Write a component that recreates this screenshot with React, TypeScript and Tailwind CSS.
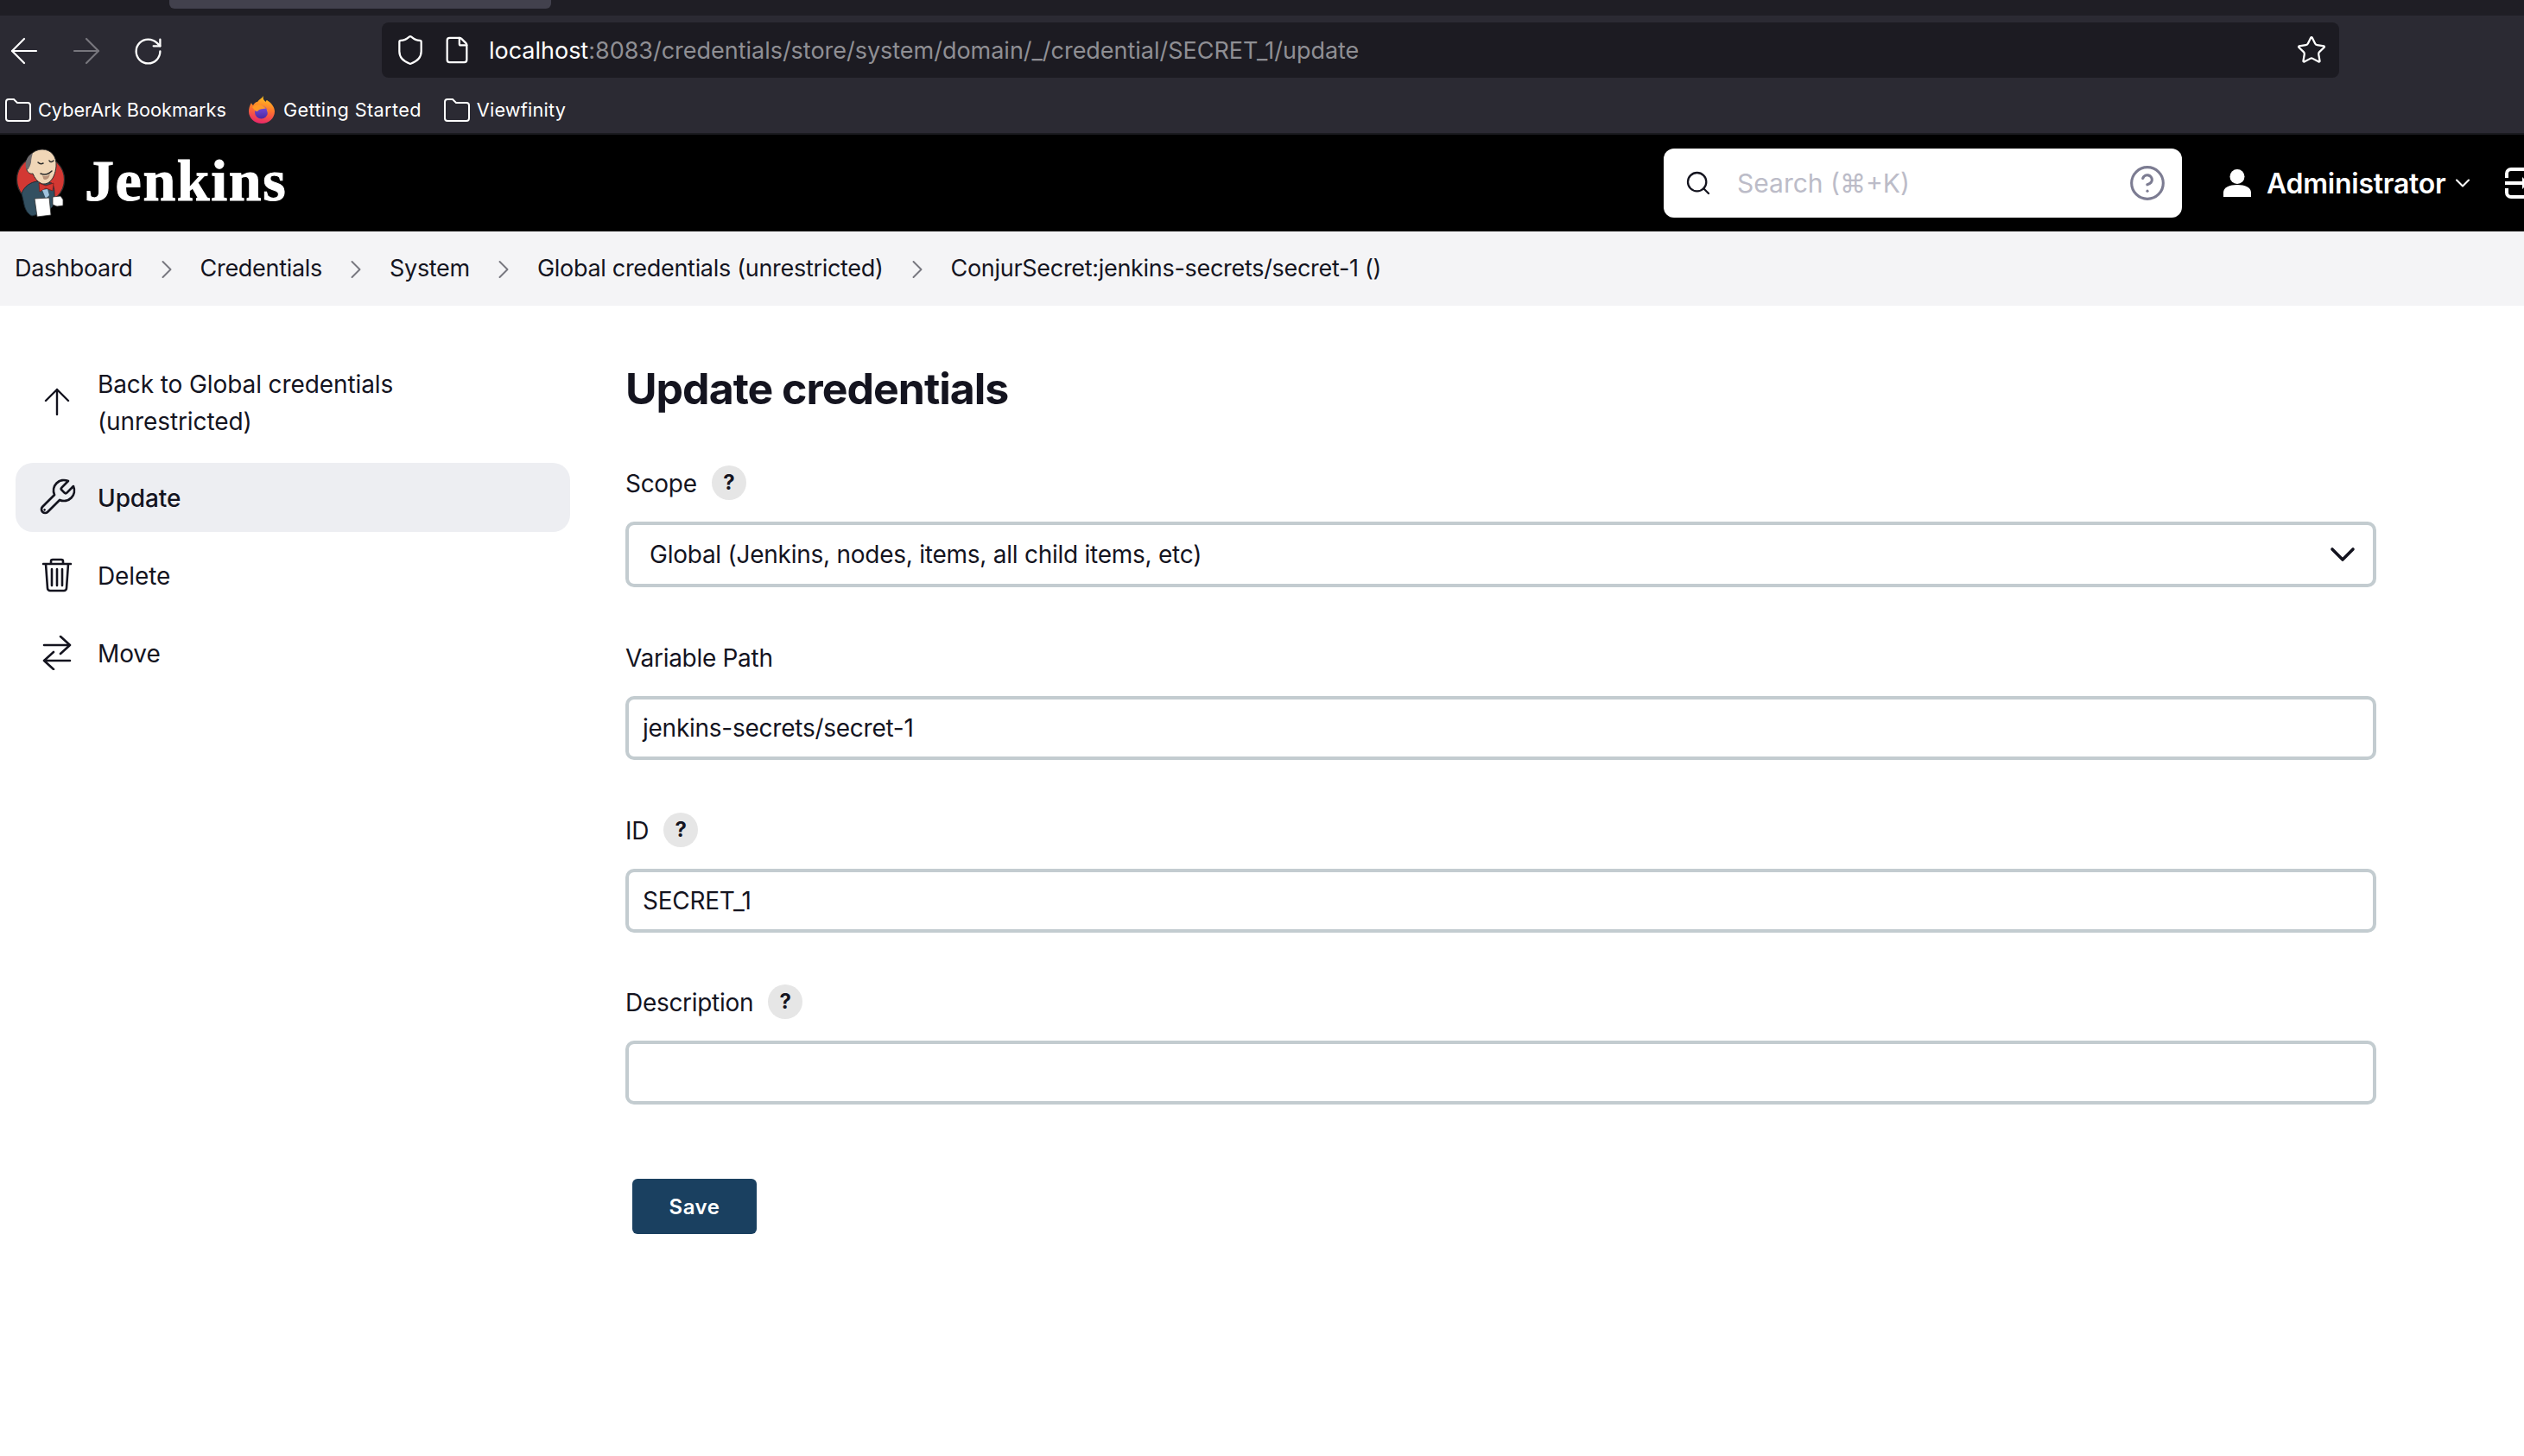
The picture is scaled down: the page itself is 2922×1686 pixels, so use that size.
import React from "react";
import { ArrowLeft, ArrowRight, RotateCw, Shield, File, Star, Search, CircleHelp, ChevronDown, ChevronRight } from "lucide-react";

const inter = "font-['Inter','Noto_Sans',sans-serif]";

function FolderIcon({ cls }: { cls?: string }) {
  return (
    <svg width="30" height="27" viewBox="0 0 30 27" fill="none" stroke="#fff" strokeWidth="2" className={`shrink-0 ${cls ?? ""}`}>
      <path d="M1 4a3 3 0 0 1 3-3h6l4 4h12a3 3 0 0 1 3 3v15a3 3 0 0 1-3 3H4a3 3 0 0 1-3-3z" />
    </svg>
  );
}

function FirefoxLogo() {
  return (
    <svg width="31" height="32" viewBox="0 0 31 32" className="shrink-0">
      <defs>
        <linearGradient id="ff" x1="0.6" y1="0" x2="0.4" y2="1">
          <stop offset="0" stopColor="#ffc81f" />
          <stop offset="0.45" stopColor="#ff7a2b" />
          <stop offset="1" stopColor="#e8246a" />
        </linearGradient>
        <linearGradient id="fp" x1="0.5" y1="0" x2="0.5" y2="1">
          <stop offset="0" stopColor="#7a4de0" />
          <stop offset="1" stopColor="#4a2aa0" />
        </linearGradient>
      </defs>
      <path d="M17 0c-1 3 0 5 3 7 0-1 0-2 1-2 5 3 9 8 9 13 0 8-7 14-15 14S0 26 0 18c0-3 1-7 3-10 0 1 1 2 2 3 1-2 3-4 5-4 2-3 5-4 7-7z" fill="url(#ff)" />
      <circle cx="14.5" cy="19" r="7.5" fill="url(#fp)" />
      <path d="M4 13c3-3 8-4 13-1 3 2 5 5 5 9 1-4-1-7-5-6-3 0-6 1-7 3-2 0-4-2-6-5z" fill="#ff9a26" />
    </svg>
  );
}

function JenkinsLogo() {
  return (
    <svg width="60" height="80" viewBox="0 0 60 80" className="shrink-0">
      <circle cx="29" cy="36" r="27.5" fill="#d33833" stroke="#2e2e2e" strokeWidth="1.2" />
      <path d="M7 52c3-8 10-13 18-14l17 2c3 4 3 10 3 16l-2 11-6 6-18 5c-5-2-8-8-9-13-1-5-2-9-3-13z" fill="#335061" stroke="#1c2c36" strokeWidth="1" />
      <path d="M14 24C12 10 20 1 31 1c10 0 17 8 16 20-1 8-3 13-7 17-3 3-8 4-11 2-4-2-7-6-9-11-3 1-7-2-7-5 0-3 1-5 1-5z" fill="#f0d6b7" stroke="#2e2e2e" strokeWidth="1" />
      <path d="M13 25c-3-7-1-16 7-20-1 4-2 7-2 11-1 4-2 7-5 9z" fill="#6d6b6d" />
      <path d="M26 16c2 2 4 2 6 1M39 14c1 2 3 2 5 0M29 29c5 2 9 1 13-3" stroke="#2a2a2a" strokeWidth="1.5" fill="none" strokeLinecap="round" />
      <path d="M31 31c3 2 7 1 9-2-1 5-3 7-6 7-2 0-2-2-3-5z" fill="#b8927a" />
      <path d="M27 40l8 3 9-3-1 9-8-3-7 4z" fill="#d33833" stroke="#7a1a17" strokeWidth="0.8" />
      <path d="M31 48l6-1 2 7-4 4z" fill="#9fc3dd" />
      <path d="M22 58l17-1 2 20-16 2z" fill="#fff" stroke="#2e2e2e" strokeWidth="0.8" />
      <path d="M43 56l9-1 3 4 0 7-7 1-5-2z" fill="#fff" stroke="#2e2e2e" strokeWidth="0.8" />
    </svg>
  );
}

function ArrowUpIcon() {
  return (
    <svg width="30" height="32" viewBox="0 0 30 32" fill="none" stroke="#14141f" strokeWidth="2.4" strokeLinecap="round" strokeLinejoin="round" className="shrink-0 -mt-[2px]">
      <path d="M15 31V2M2 15 15 2l13 13" />
    </svg>
  );
}

function WrenchIcon() {
  return (
    <svg width="48" height="48" viewBox="0 0 24 24" fill="none" stroke="#14141f" strokeWidth="1.35" strokeLinecap="round" strokeLinejoin="round" className="shrink-0">
      <path d="M14.7 6.3a1 1 0 0 0 0 1.4l1.6 1.6a1 1 0 0 0 1.4 0l3.77-3.77a6 6 0 0 1-7.94 7.94l-6.91 6.91a2.12 2.12 0 0 1-3-3l6.91-6.91a6 6 0 0 1 7.94-7.94l-3.76 3.76z" />
      <circle cx="4.8" cy="19.2" r="0.45" fill="#14141f" strokeWidth="0.5" />
    </svg>
  );
}

function TrashIcon() {
  return (
    <svg width="34" height="40" viewBox="0 0 34 40" fill="none" stroke="#14141f" strokeWidth="2.6" strokeLinecap="round" strokeLinejoin="round" className="shrink-0">
      <path d="M1 7h32M10 7V4a2 2 0 0 1 2-2h10a2 2 0 0 1 2 2v3M4 7l2 28a3 3 0 0 0 3 3h16a3 3 0 0 0 3-3l2-28M11 13v19M17 13v19M23 13v19" />
    </svg>
  );
}

function MoveIcon() {
  return (
    <svg width="34" height="40" viewBox="0 0 34 40" fill="none" stroke="#14141f" strokeWidth="2.6" strokeLinecap="round" strokeLinejoin="round" className="shrink-0">
      <path d="M2 11h30M21 1l11 10-11 10M32 29H2M13 19 2 29l11 10" />
    </svg>
  );
}

function PanelIcon() {
  return (
    <svg width="22" height="36" viewBox="0 0 22 36" fill="none" stroke="#fff" strokeWidth="4" className="shrink-0">
      <path d="M22 2H7a5 5 0 0 0-5 5v5M2 24v5a5 5 0 0 0 5 5h15" />
      <path d="M0 18h22" />
      <path d="M20 11v14l2-2v-10z" fill="#fff" stroke="none" />
    </svg>
  );
}

function Crumb({ children, last }: { children: React.ReactNode; last?: boolean }) {
  return (
    <>
      <span className="whitespace-nowrap">{children}</span>
      {!last && <ChevronRight className="mx-[21px] w-[36px] h-[36px] text-[#77777f] shrink-0" strokeWidth={1.3} />}
    </>
  );
}

function SideItem({ icon, children, active, cls }: { icon: React.ReactNode; children: React.ReactNode; active?: boolean; cls?: string }) {
  return (
    <div className={`flex items-center rounded-[20px] pl-[28px] min-h-[80px] ${active ? "bg-[#edeef2] font-medium" : ""} ${cls ?? "mb-[10px]"}`}>
      <div className="w-[40px] h-[48px] flex items-center justify-center mr-[27px] shrink-0">{icon}</div>
      <div className="leading-[43px] tracking-[-0.1px] pt-[2px]">{children}</div>
    </div>
  );
}

function Help() {
  return (
    <span className="ml-[17px] w-[40px] h-[40px] rounded-full bg-[#e6e6e6] flex items-center justify-center text-[24px] font-bold text-[#14141f] -mt-[2px]">?</span>
  );
}

function Label({ children, help }: { children: React.ReactNode; help?: boolean }) {
  return (
    <div className="flex items-center h-[44px] mb-[22px] tracking-[-0.3px]">
      <span>{children}</span>
      {help && <Help />}
    </div>
  );
}

function Field({ value }: { value?: string }) {
  return (
    <div className="h-[74px] border-4 border-[#c3ccd0] rounded-[10px] flex items-center px-[16px] bg-white tracking-[-0.25px]">{value}</div>
  );
}

export default function App() {
  return (
    <div className={`w-[2922px] h-[1686px] bg-white overflow-hidden text-[#14141f] text-[28px] ${inter}`}>
      {/* tab strip */}
      <div className="h-[18px] bg-[#1f1e25] pl-[196px]">
        <div className="w-[442px] h-[10px] bg-[#42414d] rounded-b-[6px]" />
      </div>
      {/* browser toolbar */}
      <div className="h-[136px] bg-[#2b2a33] text-white">
        <div className="flex items-center h-[80px] pl-[4px]">
          <div className="flex items-center w-[438px] mt-[2px]">
            <ArrowLeft className="w-[48px] h-[48px] mr-[24px]" strokeWidth={1.1} />
            <ArrowRight className="w-[48px] h-[48px] mr-[29px] text-[#77767d]" strokeWidth={1.1} />
            <RotateCw className="w-[37px] h-[37px]" strokeWidth={1.5} />
          </div>
          <div className="w-[2266px] h-[64px] bg-[#1c1b22] rounded-[8px] flex items-center pl-[14px] pr-[14px]">
            <Shield className="w-[38px] h-[38px] mr-[18px]" strokeWidth={1.4} />
            <File className="w-[34px] h-[36px] mr-[20px]" strokeWidth={1.6} />
            <span className="text-[27px] whitespace-nowrap mt-[2px] tracking-[-0.02px]">
              localhost<span className="text-[#8f8f94]">:8083/credentials/store/system/domain/_/credential/SECRET_1/update</span>
            </span>
            <Star className="w-[36px] h-[36px] ml-auto" strokeWidth={1.5} />
          </div>
        </div>
        <div className="flex items-center h-[56px] pl-[6px] pt-[2px] text-[21.7px]">
          <FolderIcon cls="mr-[8px]" />
          <span>CyberArk Bookmarks</span>
          <span className="ml-[26px] mr-[9px]"><FirefoxLogo /></span>
          <span className="tracking-[0.35px]">Getting Started</span>
          <FolderIcon cls="ml-[26px] mr-[8px]" />
          <span className="tracking-[0.2px]">Viewfinity</span>
        </div>
      </div>
      {/* Jenkins header */}
      <div className="h-[114px] bg-black border-t-2 border-[#1a1a1f] flex items-center text-white overflow-hidden">
        <div className="w-[1926px] shrink-0 flex items-center pl-[18px]">
          <div className="mr-[20px]"><JenkinsLogo /></div>
          <span className="font-['Liberation_Serif',serif] font-bold text-[68px] leading-none tracking-[1.6px] -mt-[7px] [-webkit-text-stroke:1px_white]">Jenkins</span>
        </div>
        <div className="w-[600px] h-[80px] shrink-0 bg-white rounded-[12px] flex items-center pl-[24px] pr-[18px] text-[#14141f]">
          <Search className="w-[32px] h-[32px]" strokeWidth={1.7} />
          <span className="ml-[29px] text-[30px] text-[#bcbcc8]">Search (⌘+K)</span>
          <CircleHelp className="w-[44px] h-[44px] ml-auto text-[#7c7c92]" strokeWidth={1.7} />
        </div>
        <svg width="34" height="32" viewBox="0 0 34 32" className="ml-[47px] shrink-0">
          <circle cx="17" cy="8.5" r="8.5" fill="#fff" />
          <path d="M1 32v-5c0-6 7-9 16-9s16 3 16 9v5z" fill="#fff" />
        </svg>
        <span className="ml-[17px] font-semibold text-[32px] w-[208px] shrink-0 whitespace-nowrap tracking-[-0.25px] mt-[2px]">Administrator</span>
        <ChevronDown className="ml-[5px] w-[28px] h-[28px] shrink-0" strokeWidth={1.8} />
        <div className="ml-[35px]"><PanelIcon /></div>
      </div>
      {/* breadcrumb */}
      <div className="h-[86px] bg-[#f4f4f6] flex items-center pl-[17px] pt-[1px] text-[27px] tracking-[-0.3px]">
        <Crumb>Dashboard</Crumb>
        <Crumb>Credentials</Crumb>
        <Crumb>System</Crumb>
        <Crumb>Global credentials (unrestricted)</Crumb>
        <Crumb last>ConjurSecret:jenkins-secrets/secret-1 ()</Crumb>
      </div>
      {/* body */}
      <div className="flex pl-[18px] pt-[66px]">
        <div className="w-[642px] shrink-0">
          <SideItem cls="mb-[24px] h-[92px]" icon={<ArrowUpIcon />}>
            Back to Global credentials<br />(unrestricted)
          </SideItem>
          <SideItem active icon={<WrenchIcon />}>Update</SideItem>
          <SideItem icon={<TrashIcon />}>Delete</SideItem>
          <SideItem icon={<MoveIcon />}>Move</SideItem>
        </div>
        <div className="ml-[64px] w-[2027px] shrink-0">
          <h1 className="text-[50px] font-bold leading-[64px] tracking-[-1px] -mt-[2px] mb-[56px]">Update credentials</h1>
          <Label help>Scope</Label>
          <div className="h-[76px] border-4 border-[#c3ccd0] rounded-[10px] flex items-center pl-[24px] pr-[11px] mb-[60px] tracking-[-0.25px]">
            <span>Global (Jenkins, nodes, items, all child items, etc)</span>
            <ChevronDown className="ml-auto w-[48px] h-[48px]" strokeWidth={1.8} />
          </div>
          <Label>Variable Path</Label>
          <div className="mb-[60px]"><Field value="jenkins-secrets/secret-1" /></div>
          <Label help>ID</Label>
          <div className="mb-[59px]"><Field value="SECRET_1" /></div>
          <Label help>Description</Label>
          <Field />
          <button className="block mt-[86px] ml-[8px] w-[144px] h-[64px] bg-[#1a4060] rounded-[6px] text-white text-[24px] font-semibold tracking-[0.5px] pt-[1px]">Save</button>
        </div>
      </div>
    </div>
  );
}
